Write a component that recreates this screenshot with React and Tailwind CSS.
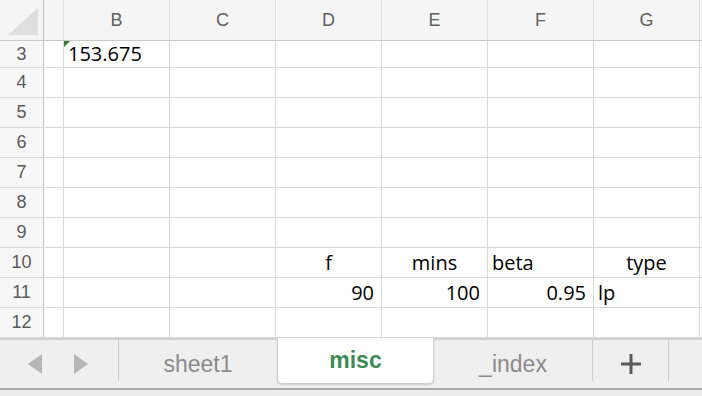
const COLS = ['B', 'C', 'D', 'E', 'F', 'G'];

const ROWS = [
  { n: 3, h: 'h-[27px]' },
  { n: 4, h: 'h-[30px]' },
  { n: 5, h: 'h-[30px]' },
  { n: 6, h: 'h-[30px]' },
  { n: 7, h: 'h-[30px]' },
  { n: 8, h: 'h-[30px]' },
  { n: 9, h: 'h-[30px]' },
  { n: 10, h: 'h-[30px]' },
  { n: 11, h: 'h-[30px]' },
  { n: 12, h: 'h-[30px]' },
];

// cell values keyed by row, then column letter
const DATA = {
  3: { B: { text: '153.675', align: 'left', flag: true } },
  10: {
    D: { text: 'f', align: 'center' },
    E: { text: 'mins', align: 'center' },
    F: { text: 'beta', align: 'left' },
    G: { text: 'type', align: 'center' },
  },
  11: {
    D: { text: '90', align: 'right' },
    E: { text: '100', align: 'right' },
    F: { text: '0.95', align: 'right' },
    G: { text: 'lp', align: 'left' },
  },
};

const alignCls = {
  left: 'justify-start pl-[4px]',
  center: 'justify-center',
  right: 'justify-end pr-[7px]',
};

function Cell({ value }) {
  return (
    <div className="relative w-[106px] h-full border-r border-[#d7d7d7] flex items-center overflow-hidden">
      {value && (
        <div className={`w-full flex ${alignCls[value.align]}`}>
          <span className="text-[20px] leading-none text-black font-['Open_Sans',sans-serif]">{value.text}</span>
        </div>
      )}
      {value?.flag && (
        <svg className="absolute left-0 top-0" width="6" height="6" viewBox="0 0 6 6">
          <polygon points="0,0 6,0 0,6" fill="#2f7d32" />
        </svg>
      )}
    </div>
  );
}

function Row({ n, h }) {
  const cells = DATA[n] || {};
  return (
    <div className={`flex ${h} border-b border-[#d7d7d7]`}>
      <div className="w-[44px] h-full shrink-0 bg-[#f7f7f7] border-r border-[#c6c6c6] flex items-center justify-center text-[18px] text-[#5a5a5a] font-['Liberation_Sans',sans-serif]">
        {n}
      </div>
      <div className="w-[20px] h-full shrink-0 border-r border-[#d7d7d7]" />
      {COLS.map((c) => (
        <Cell key={c} value={cells[c]} />
      ))}
      <div className="flex-1" />
    </div>
  );
}

function Tab({ label, w, active }) {
  if (active) {
    return (
      <div className={`${w} h-[46px] -mt-[2px] self-start bg-white rounded-b-[5px] border-x border-b border-[#cfcfcf] shadow-[0_1px_2px_rgba(0,0,0,0.15)] flex items-center justify-center`}>
        <span className="text-[23px] font-bold text-[#3e8a55] font-['Liberation_Sans',sans-serif]">{label}</span>
      </div>
    );
  }
  return (
    <div className={`${w} h-full flex items-center justify-center`}>
      <span className="text-[23px] text-[#8b8b8b] font-['Liberation_Sans',sans-serif]">{label}</span>
    </div>
  );
}

function Sep() {
  return <div className="w-px h-[41px] self-start bg-[#cbcbcb]" />;
}

export default function App() {
  return (
    <div className="w-[702px] h-[396px] overflow-hidden bg-white flex flex-col">
      {/* column header */}
      <div className="flex h-[41px] shrink-0 bg-[#f5f5f5] border-b border-[#c9c9c9]">
        <div className="w-[44px] shrink-0 border-r border-[#c6c6c6] relative">
          <svg className="absolute left-[8px] top-[8px]" width="30" height="27" viewBox="0 0 30 27">
            <polygon points="0,27 30,27 30,0" fill="#dedede" />
          </svg>
        </div>
        <div className="w-[20px] shrink-0 border-r border-[#e0e0e0]" />
        {COLS.map((c) => (
          <div key={c} className="w-[106px] shrink-0 border-r border-[#e0e0e0] flex items-center justify-center text-[18px] text-[#5f5f5f] font-['Liberation_Sans',sans-serif]">
            {c}
          </div>
        ))}
        <div className="flex-1" />
      </div>

      {ROWS.map((r) => (
        <Row key={r.n} n={r.n} h={r.h} />
      ))}

      {/* sheet tabs */}
      <div className="flex h-[50px] shrink-0 bg-[#efefef] border-t-2 border-[#d2d2d2]">
        <div className="w-[118px] h-full flex items-center">
          <svg className="ml-[28px]" width="14" height="20" viewBox="0 0 14 20">
            <polygon points="14,0 14,20 0,10" fill="#b6b6b6" />
          </svg>
          <svg className="ml-[32px]" width="14" height="20" viewBox="0 0 14 20">
            <polygon points="0,0 0,20 14,10" fill="#b6b6b6" />
          </svg>
        </div>
        <Sep />
        <Tab label="sheet1" w="w-[158px]" />
        <Tab label="misc" w="w-[157px]" active />
        <Tab label="_index" w="w-[158px]" />
        <Sep />
        <div className="w-[75px] h-full flex items-center justify-center">
          <svg width="20" height="20" viewBox="0 0 20 20">
            <rect x="0" y="8.5" width="20" height="3" fill="#5b5b5b" />
            <rect x="8.5" y="0" width="3" height="20" fill="#5b5b5b" />
          </svg>
        </div>
        <Sep />
        <div className="flex-1" />
      </div>
      <div className="h-[2px] shrink-0 bg-[#a9a9a9]" />
      <div className="flex-1 bg-[#ececec]" />
    </div>
  );
}
